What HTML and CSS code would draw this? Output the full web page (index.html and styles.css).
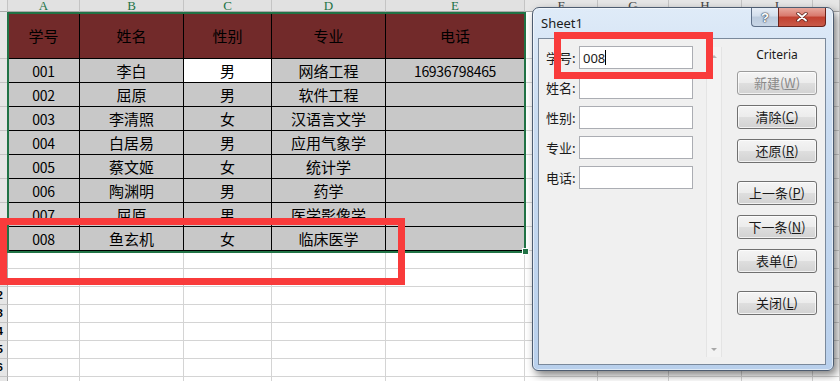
FILE: index.html
```html
<!DOCTYPE html>
<html lang="zh-CN">
<head>
<meta charset="utf-8">
<title>Sheet1</title>
<link rel="stylesheet" href="styles.css">
</head>
<body>
<div class="screen">
  <div class="sheet">
    <div class="c ch"></div>
    <div class="c ch sel">A</div><div class="c ch sel">B</div><div class="c ch sel">C</div><div class="c ch sel">D</div><div class="c ch sel">E</div>
    <div class="c ch">F</div><div class="c ch">G</div><div class="c ch">H</div><div class="c ch">I</div><div class="c ch"></div>

    <div class="c rh"></div>
    <div class="c t th">学号</div><div class="c t th">姓名</div><div class="c t th">性别</div><div class="c t th">专业</div><div class="c t th">电话</div>
    <div class="c"></div><div class="c"></div><div class="c"></div><div class="c"></div><div class="c"></div>

    <div class="c rh"></div>
    <div class="c t td num">001</div><div class="c t td">李白</div><div class="c t td white">男</div><div class="c t td">网络工程</div><div class="c t td num">16936798465</div>
    <div class="c"></div><div class="c"></div><div class="c"></div><div class="c"></div><div class="c"></div>

    <div class="c rh"></div>
    <div class="c t td num">002</div><div class="c t td">屈原</div><div class="c t td">男</div><div class="c t td">软件工程</div><div class="c t td"></div>
    <div class="c"></div><div class="c"></div><div class="c"></div><div class="c"></div><div class="c"></div>

    <div class="c rh"></div>
    <div class="c t td num">003</div><div class="c t td">李清照</div><div class="c t td">女</div><div class="c t td">汉语言文学</div><div class="c t td"></div>
    <div class="c"></div><div class="c"></div><div class="c"></div><div class="c"></div><div class="c"></div>

    <div class="c rh"></div>
    <div class="c t td num">004</div><div class="c t td">白居易</div><div class="c t td">男</div><div class="c t td">应用气象学</div><div class="c t td"></div>
    <div class="c"></div><div class="c"></div><div class="c"></div><div class="c"></div><div class="c"></div>

    <div class="c rh"></div>
    <div class="c t td num">005</div><div class="c t td">蔡文姬</div><div class="c t td">女</div><div class="c t td">统计学</div><div class="c t td"></div>
    <div class="c"></div><div class="c"></div><div class="c"></div><div class="c"></div><div class="c"></div>

    <div class="c rh"></div>
    <div class="c t td num">006</div><div class="c t td">陶渊明</div><div class="c t td">男</div><div class="c t td">药学</div><div class="c t td"></div>
    <div class="c"></div><div class="c"></div><div class="c"></div><div class="c"></div><div class="c"></div>

    <div class="c rh"></div>
    <div class="c t td num">007</div><div class="c t td">屈原</div><div class="c t td">男</div><div class="c t td">医学影像学</div><div class="c t td"></div>
    <div class="c"></div><div class="c"></div><div class="c"></div><div class="c"></div><div class="c"></div>

    <div class="c rh"></div>
    <div class="c t td num">008</div><div class="c t td">鱼玄机</div><div class="c t td">女</div><div class="c t td">临床医学</div><div class="c t td"></div>
    <div class="c"></div><div class="c"></div><div class="c"></div><div class="c"></div><div class="c"></div>

    <div class="c rh"><span>10</span></div>
    <div class="c"></div><div class="c"></div><div class="c"></div><div class="c"></div><div class="c"></div><div class="c"></div><div class="c"></div><div class="c"></div><div class="c"></div><div class="c"></div>
    <div class="c rh"><span>11</span></div>
    <div class="c"></div><div class="c"></div><div class="c"></div><div class="c"></div><div class="c"></div><div class="c"></div><div class="c"></div><div class="c"></div><div class="c"></div><div class="c"></div>
    <div class="c rh"><span>12</span></div>
    <div class="c"></div><div class="c"></div><div class="c"></div><div class="c"></div><div class="c"></div><div class="c"></div><div class="c"></div><div class="c"></div><div class="c"></div><div class="c"></div>
    <div class="c rh"><span>13</span></div>
    <div class="c"></div><div class="c"></div><div class="c"></div><div class="c"></div><div class="c"></div><div class="c"></div><div class="c"></div><div class="c"></div><div class="c"></div><div class="c"></div>
    <div class="c rh"><span>14</span></div>
    <div class="c"></div><div class="c"></div><div class="c"></div><div class="c"></div><div class="c"></div><div class="c"></div><div class="c"></div><div class="c"></div><div class="c"></div><div class="c"></div>
    <div class="c rh"><span>15</span></div>
    <div class="c"></div><div class="c"></div><div class="c"></div><div class="c"></div><div class="c"></div><div class="c"></div><div class="c"></div><div class="c"></div><div class="c"></div><div class="c"></div>
    <div class="c rh"><span>16</span></div>
    <div class="c"></div><div class="c"></div><div class="c"></div><div class="c"></div><div class="c"></div><div class="c"></div><div class="c"></div><div class="c"></div><div class="c"></div><div class="c"></div>
    <div class="c rh"><span>17</span></div>
    <div class="c"></div><div class="c"></div><div class="c"></div><div class="c"></div><div class="c"></div><div class="c"></div><div class="c"></div><div class="c"></div><div class="c"></div><div class="c"></div>
  </div>

  <div class="selection"></div>
  <div class="handle"></div>

  <div class="dialog">
    <div class="titlebar">
      <div class="title">Sheet1</div>
      <div class="tb-buttons">
        <div class="tb-help">?</div>
        <div class="tb-close">
          <svg width="12" height="10" viewBox="0 0 12 10">
            <path d="M2 1.5 L10 8.5 M10 1.5 L2 8.5" stroke="#5a2019" stroke-width="3.4" stroke-linecap="round"/>
            <path d="M2 1.5 L10 8.5 M10 1.5 L2 8.5" stroke="#ffffff" stroke-width="1.9" stroke-linecap="round"/>
          </svg>
        </div>
      </div>
    </div>
    <div class="client">
      <div class="form">
        <div class="field"><span class="label">学号:</span><div class="input"><span>008</span><i class="caret"></i></div></div>
        <div class="field"><span class="label">姓名:</span><div class="input"></div></div>
        <div class="field"><span class="label">性别:</span><div class="input"></div></div>
        <div class="field"><span class="label">专业:</span><div class="input"></div></div>
        <div class="field"><span class="label">电话:</span><div class="input"></div></div>
      </div>
      <div class="scroll">
        <span class="arrow up"></span>
        <span class="arrow down"></span>
      </div>
      <div class="actions">
        <div class="criteria">Criteria</div>
        <div class="btn disabled first">新建(<u>W</u>)</div>
        <div class="btn gap-s">清除(<u>C</u>)</div>
        <div class="btn gap-s">还原(<u>R</u>)</div>
        <div class="btn gap-l">上一条(<u>P</u>)</div>
        <div class="btn gap-s">下一条(<u>N</u>)</div>
        <div class="btn gap-s">表单(<u>F</u>)</div>
        <div class="btn gap-l">关闭(<u>L</u>)</div>
      </div>
    </div>
  </div>

  <div class="mark mark-table"></div>
  <div class="mark mark-field"></div>
</div>
</body>
</html>
```

FILE: styles.css
```css
html, body {
  margin: 0;
  padding: 0;
  background: #ffffff;
}

.screen {
  position: relative;
  width: 840px;
  height: 381px;
  overflow: hidden;
  background: #ffffff;
}

.sheet {
  display: grid;
  grid-template-columns: 8px 72px 104px 88px 114px 139px 73px 71px 73px 71px 1fr;
  grid-template-rows: 12px 47px repeat(8, 24px) repeat(8, 18px);
  font-family: "Noto Sans CJK SC", "Noto Sans", sans-serif;
  font-size: 15px;
  color: #000000;
}

.c {
  box-sizing: border-box;
  display: flex;
  align-items: center;
  justify-content: center;
  border-right: 1px solid #d4d4d4;
  border-bottom: 1px solid #d4d4d4;
  overflow: hidden;
  white-space: nowrap;
  line-height: 1;
}

.ch {
  align-items: flex-start;
  background: #e6e6e6;
  border-right-color: #c4c4c4;
  border-bottom-color: #a9a9a9;
  font-family: "Liberation Serif", serif;
  font-size: 13px;
  line-height: 11px;
  color: #444444;
}

.ch.sel {
  color: #217346;
  background: #e1e1e1;
}

.rh {
  justify-content: flex-end;
  background: #e6e6e6;
  border-right-color: #a9a9a9;
  border-bottom-color: #c4c4c4;
  font-family: "Liberation Sans", sans-serif;
  font-size: 11px;
  font-weight: bold;
}

.rh span {
  flex-shrink: 0;
  margin-right: 4px;
}

.t {
  border-right-color: #000000;
  border-bottom-color: #000000;
}

.th {
  background: #722a2a;
  font-size: 15px;
}

.td {
  background: #c8c8c8;
}

.td.white {
  background: #ffffff;
}

.num {
  font-size: 14px;
  letter-spacing: -0.3px;
}

.selection {
  position: absolute;
  left: 7px;
  top: 12px;
  width: 519px;
  height: 241px;
  box-sizing: border-box;
  border: 2px solid #217346;
}

.handle {
  position: absolute;
  left: 523px;
  top: 249px;
  width: 5px;
  height: 5px;
  background: #217346;
  outline: 1px solid #ffffff;
}

/* ---------- dialog ---------- */
.dialog {
  position: absolute;
  left: 532px;
  top: 7px;
  width: 302px;
  height: 364px;
  box-sizing: border-box;
  border: 1px solid #4d5c70;
  border-radius: 7px 7px 6px 6px;
  background: linear-gradient(180deg, #dfebf8 0%, #cadcf1 30%, #c0d5ee 70%, #b9d0ec 100%);
  box-shadow: 3px 4px 9px rgba(0, 0, 0, 0.5), inset 0 0 0 1px rgba(255, 255, 255, 0.55);
  padding: 0 7px 5px 5px;
  display: flex;
  flex-direction: column;
  font-family: "Noto Sans CJK SC", "Noto Sans", sans-serif;
}

.titlebar {
  height: 30px;
  display: flex;
  justify-content: space-between;
  align-items: flex-start;
  padding-left: 3px;
}

.title {
  margin-top: 7px;
  font-family: "Noto Sans", sans-serif;
  font-size: 13px;
  line-height: 16px;
  color: #1b1b1b;
}

.tb-buttons {
  display: flex;
}

.tb-help {
  box-sizing: border-box;
  width: 27px;
  height: 19px;
  border: 1px solid #5f7088;
  border-top: none;
  border-right: none;
  border-radius: 0 0 0 4px;
  background: linear-gradient(180deg, #e6edf6 0%, #d3deeb 45%, #bccbdd 50%, #c8d6e6 100%);
  display: flex;
  align-items: center;
  justify-content: center;
  font-family: "Liberation Sans", sans-serif;
  font-weight: bold;
  font-size: 13px;
  color: #ffffff;
  text-shadow: 0 0 1px #3a4658, 0 0 1px #3a4658, 0 0 2px #3a4658;
}

.tb-close {
  box-sizing: border-box;
  width: 48px;
  height: 19px;
  border: 1px solid #6b2219;
  border-top: none;
  border-radius: 0 0 4px 0;
  background: linear-gradient(180deg, #e8a89d 0%, #d8786b 45%, #c1402f 50%, #c95a48 100%);
  display: flex;
  align-items: center;
  justify-content: center;
}

.client {
  flex: 1;
  display: flex;
  background: #f0f0f0;
  border: 1px solid #7a899b;
}

.form {
  width: 147px;
  padding: 7px 0 0 7px;
  display: flex;
  flex-direction: column;
  gap: 7px;
}

.field {
  display: flex;
  align-items: center;
  height: 23px;
}

.label {
  width: 33px;
  font-size: 13px;
  color: #1a1a1a;
  line-height: 16px;
}

.input {
  box-sizing: border-box;
  width: 114px;
  height: 23px;
  border: 1px solid #abadb3;
  background: #ffffff;
  display: flex;
  align-items: center;
  padding-left: 3px;
  font-family: "Noto Sans", sans-serif;
  font-size: 13px;
  color: #1a1a1a;
}

.caret {
  display: block;
  width: 1px;
  height: 15px;
  background: #000000;
}

.scroll {
  box-sizing: border-box;
  margin: 8px 0 0 13px;
  width: 16px;
  height: 310px;
  border-left: 1px solid #e4e4e4;
  border-right: 1px solid #e4e4e4;
  background: #f3f3f3;
  display: flex;
  flex-direction: column;
  justify-content: space-between;
  align-items: center;
  padding: 8px 0 6px;
}

.arrow {
  width: 0;
  height: 0;
  border-left: 3px solid transparent;
  border-right: 3px solid transparent;
}

.arrow.up {
  border-bottom: 3px solid #b8b8b8;
}

.arrow.down {
  border-top: 3px solid #a8a8a8;
}

.actions {
  margin-left: 15px;
  width: 80px;
  display: flex;
  flex-direction: column;
}

.criteria {
  margin-top: 8px;
  text-align: center;
  font-family: "Noto Sans", sans-serif;
  font-size: 12px;
  line-height: 16px;
  color: #1a1a1a;
}

.btn {
  box-sizing: border-box;
  height: 24px;
  border: 1px solid #707070;
  border-radius: 3px;
  background: linear-gradient(180deg, #f4f4f4 0%, #ececec 48%, #dedede 52%, #d2d2d2 100%);
  box-shadow: inset 0 0 0 1px rgba(255, 255, 255, 0.7);
  display: flex;
  align-items: center;
  justify-content: center;
  font-size: 13px;
  color: #1a1a1a;
  line-height: 16px;
}

.btn u {
  text-decoration: underline;
  text-underline-offset: 1px;
}

.btn.first {
  margin-top: 8px;
}

.btn.disabled {
  color: #8a8a8a;
  border-color: #9c9c9c;
}

.btn.gap-s {
  margin-top: 10px;
}

.btn.gap-l {
  margin-top: 18px;
}

/* ---------- red annotations ---------- */
.mark {
  position: absolute;
  box-sizing: border-box;
  border: 7px solid #f93b3b;
}

.mark-table {
  left: 0;
  top: 218px;
  width: 405px;
  height: 67px;
}

.mark-field {
  left: 554px;
  top: 32px;
  width: 159px;
  height: 47px;
}
```
